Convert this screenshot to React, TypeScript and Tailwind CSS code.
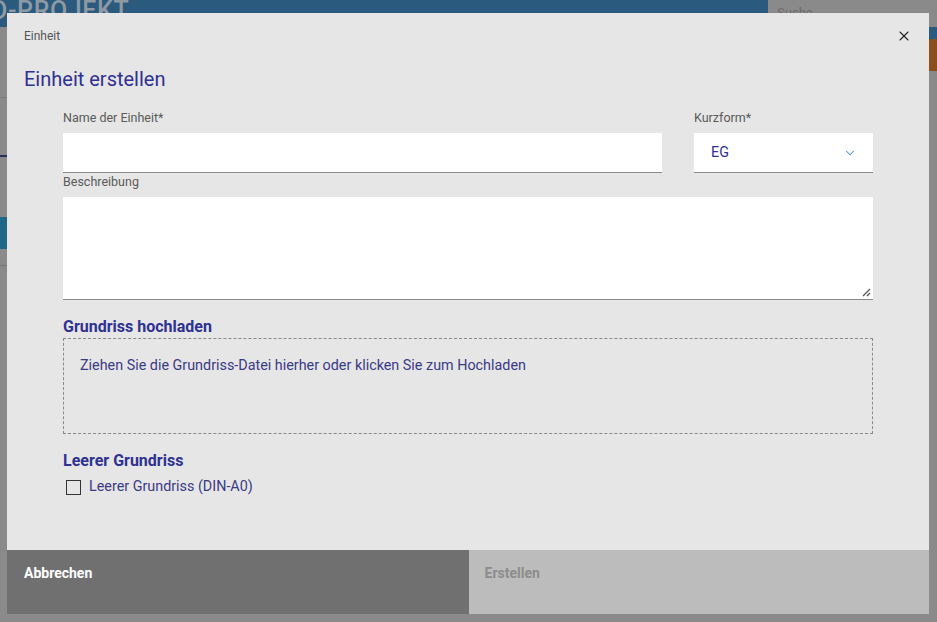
import { X, ChevronDown } from "lucide-react";

const font = { fontFamily: "Roboto, 'Noto Sans', sans-serif" };

function BackgroundPage() {
  return (
    <div className="h-[622px] w-[937px] bg-[#8a8a8a] overflow-hidden">
      <div className="flex h-[27px]">
        <div className="flex-1 bg-[#2a5a7e] overflow-hidden">
          <span className="-ml-[9px] block text-[25px] font-medium leading-[22px] tracking-wide text-[#8f99a3]">
            D-PROJEKT
          </span>
        </div>
        <div className="w-[169px] pl-[9px] pt-[3px] text-[13px] text-[#6a6a6a]">Suche</div>
      </div>
      <div className="flex h-[12px] justify-end">
        <div className="w-[8px] bg-[#2a5a7e]" />
      </div>
      <div className="flex h-[32px] justify-end">
        <div className="w-[8px] bg-[#8a4f1c]" />
      </div>
      <div className="mt-[26px] h-px w-[8px] bg-[#7a7a7a]" />
      <div className="mt-[57px] h-[2px] w-[8px] bg-[#2a2f5a]" />
      <div className="mt-[60px] h-[32px] w-[8px] bg-[#1f6888]" />
      <div className="mt-[16px] h-px w-[8px] bg-[#777]" />
    </div>
  );
}

function Label({ children }: { children: React.ReactNode }) {
  return <div className="text-[12.5px] leading-[14px] text-[#5a5a5a]">{children}</div>;
}

export default function App() {
  return (
    <div className="relative h-[622px] w-[937px] overflow-hidden" style={font}>
      <BackgroundPage />

      <div className="absolute left-[7px] top-[13px] flex h-[601px] w-[922px] flex-col bg-[#e6e6e6]">
        <div className="flex items-center justify-between pl-[17px] pr-[17px] pt-[15px]">
          <span className="text-[12px] leading-[14px] text-[#555]">Einheit</span>
          <X className="h-[16px] w-[16px] text-[#222]" strokeWidth={1.6} />
        </div>

        <h2 className="mt-[24px] pl-[17px] text-[20px] leading-[22px] text-[#2e3192]">Einheit erstellen</h2>

        <div className="flex flex-1 flex-col px-[56px] pt-[21px]">
          <div className="flex gap-[32px]">
            <div className="flex-1">
              <Label>Name der Einheit*</Label>
              <div className="mt-[8px] h-[40px] border-b border-[#8a8a8a] bg-white" />
            </div>
            <div className="w-[179px]">
              <Label>Kurzform*</Label>
              <div className="mt-[8px] flex h-[40px] items-center justify-between border-b border-[#8a8a8a] bg-white pl-[17px] pr-[16px]">
                <span className="text-[14.3px] text-[#2e3192]">EG</span>
                <ChevronDown className="h-[14px] w-[14px] text-[#4a8fd6]" strokeWidth={1.8} />
              </div>
            </div>
          </div>

          <div className="mt-[2px]">
            <Label>Beschreibung</Label>
            <div className="relative mt-[8px] h-[103px] border-b border-[#8a8a8a] bg-white">
              <svg className="absolute bottom-[2px] right-[2px]" width="10" height="10" viewBox="0 0 10 10">
                <path d="M9 2 L2 9 M9 6 L6 9" stroke="#555" strokeWidth="1.3" />
              </svg>
            </div>
          </div>

          <h3 className="mt-[17px] text-[16px] font-bold leading-[19px] text-[#2e3192]">Grundriss hochladen</h3>
          <div className="mt-[2px] h-[96px] border border-dashed border-[#8a8a8a] px-[16px] pt-[14px]">
            <span className="text-[14.35px] leading-[16px] text-[#3a3a85]">
              Ziehen Sie die Grundriss-Datei hierher oder klicken Sie zum Hochladen
            </span>
          </div>

          <h3 className="mt-[17px] text-[16px] font-bold leading-[19px] text-[#2e3192]">Leerer Grundriss</h3>
          <label className="mt-[9px] flex items-center gap-[8px] pl-[3px]">
            <span className="h-[15px] w-[15px] border border-[#333] bg-transparent" />
            <span className="text-[14.35px] leading-[16px] text-[#3a3a85]">Leerer Grundriss (DIN-A0)</span>
          </label>
        </div>

        <div className="flex h-[64px]">
          <div className="flex flex-1 items-start bg-[#707070] pl-[17px] pt-[15px] text-[14px] font-bold leading-[16px] text-white">
            Abbrechen
          </div>
          <div className="flex flex-1 items-start bg-[#bcbcbc] pl-[16px] pt-[15px] text-[14px] font-bold leading-[16px] text-[#8c8c8c]">
            Erstellen
          </div>
        </div>
      </div>
    </div>
  );
}
